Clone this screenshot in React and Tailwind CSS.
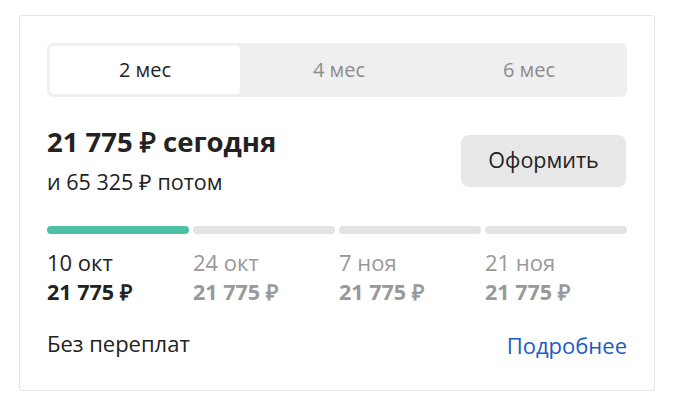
import React from "react";

const dates = [
  { d: "10 окт", a: "21 775 ₽", active: true },
  { d: "24 окт", a: "21 775 ₽" },
  { d: "7 ноя", a: "21 775 ₽" },
  { d: "21 ноя", a: "21 775 ₽" },
];

export default function App() {
  return (
    <div className="w-[680px] h-[405px] bg-white pt-[15px] pl-[19px] font-['Open_Sans',sans-serif] text-[#222222]">
      <div className="w-[636px] h-[376px] border border-[#e6e6e6] rounded-[3px] px-[27px] pt-[27px]">
        <div className="flex h-[54px] bg-[#efefef] rounded-[6px] p-[3px]">
          <div className="flex-1 flex items-center justify-center bg-white rounded-[4px] mr-[4px] text-[20px] text-[#222222]">2 мес</div>
          <div className="flex-1 flex items-center justify-center text-[20px] text-[#8c8c8c]">4 мес</div>
          <div className="flex-1 flex items-center justify-center text-[20px] text-[#8c8c8c]">6 мес</div>
        </div>
        <div className="flex justify-between mt-[29px]">
          <div>
            <div className="text-[27.5px] font-bold leading-[32px]">21 775 ₽ сегодня</div>
            <div className="text-[21.5px] leading-[24px] mt-[12px]">и 65 325 ₽ потом</div>
          </div>
          <div className="w-[165px] h-[52px] mt-[9px] mr-[1px] bg-[#e8e8e8] rounded-[8px] flex items-center justify-center text-[21.5px] font-medium leading-none pb-[2px]">Оформить</div>
        </div>
        <div className="grid grid-cols-4 gap-[4px] mt-[32px]">
          {dates.map((x, i) => (
            <div key={i}>
              <div className={`h-[8px] rounded-full ${x.active ? "bg-[#4dbfa3]" : "bg-[#e3e3e6]"}`} />
              <div className={`text-[22px] leading-[24px] mt-[16px] ${x.active ? "text-[#222222]" : "text-[#999999]"}`}>{x.d}</div>
              <div className={`text-[21.5px] font-bold leading-[24px] mt-[6px] ${x.active ? "text-[#222222]" : "text-[#999999]"}`}>{x.a}</div>
            </div>
          ))}
        </div>
        <div className="flex justify-between items-start mt-[27px]">
          <div className="text-[22px] leading-[24px]">Без переплат</div>
          <div className="text-[22px] leading-[24px] text-[#1d5bbf] mt-[2px]">Подробнее</div>
        </div>
      </div>
    </div>
  );
}
